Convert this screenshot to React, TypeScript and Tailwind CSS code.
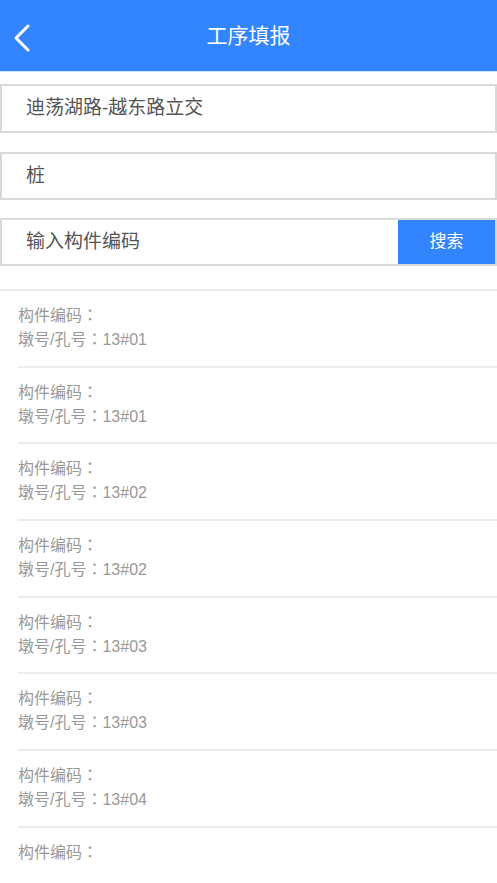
import React from "react";

const items = ["13#01", "13#01", "13#02", "13#02", "13#03", "13#03", "13#04"];

const Colon = () => (
  <span className="leading-none" style={{ fontFamily: '"Noto Sans CJK TC", sans-serif' }}>：</span>
);

export default function App() {
  return (
    <div
      className="w-[497px] h-[883px] overflow-hidden bg-white"
      style={{ fontFamily: '"Liberation Sans", Arial, "Noto Sans CJK SC", sans-serif' }}
    >
      <div className="h-[72px] bg-[#3385ff] relative flex items-center justify-center border-b border-[#cfe0fb]">
        <svg className="absolute left-[12px] top-[24px]" width="20" height="28" viewBox="0 0 20 28" fill="none">
          <path d="M16 2 L4 14 L16 26" stroke="white" strokeWidth="3" strokeLinecap="round" strokeLinejoin="round" />
        </svg>
        <span className="text-white text-[21px]">工序填报</span>
      </div>

      <div className="mt-[12px] h-[49px] border-2 border-[#d9d9d9] flex items-center pl-[24px] text-[19px] text-[#555]">
        迪荡湖路-越东路立交
      </div>
      <div className="mt-[19px] h-[48px] border-2 border-[#d9d9d9] flex items-center pl-[24px] text-[19px] text-[#555]">
        桩
      </div>
      <div className="mt-[18px] h-[48px] border-2 border-[#d9d9d9] flex">
        <div className="flex-1 flex items-center pl-[24px] text-[19px] text-[#555]">输入构件编码</div>
        <div className="w-[97px] bg-[#3385ff] flex items-center justify-center text-white text-[17px]">搜索</div>
      </div>

      <div className="mt-[23px] border-t-2 border-[#ebebeb]">
        {items.map((v, i) => (
          <div key={i} className="pl-[18px]">
            <div className="h-[74.7px] pt-[13px] text-[16px] leading-[24px] text-[#999]">
              <div className="h-[24px]">构件编码<Colon /></div>
              <div className="h-[24px]">墩号/孔号<Colon />{v}</div>
            </div>
            <div className="border-t-2 border-[#ebebeb]" />
          </div>
        ))}
        <div className="pl-[18px] pt-[13px] text-[16px] leading-[24px] text-[#999]">
          <div className="h-[24px]">构件编码<Colon /></div>
        </div>
      </div>
    </div>
  );
}
